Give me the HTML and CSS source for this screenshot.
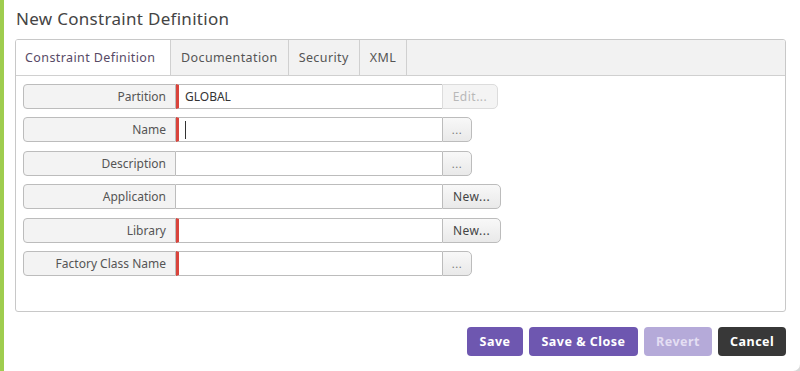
FILE: index.html
```html
<!DOCTYPE html>
<html lang="en">
<head>
  <meta charset="UTF-8" />
  <meta name="viewport" content="width=device-width, initial-scale=1" />
  <title>New Constraint Definition</title>
  <link rel="stylesheet" href="styles.css">
</head>
<body>
  <div class="dialog">
    <h1 class="dialog-title">New Constraint Definition</h1>

    <div class="tab-panel">
      <div class="tab-bar">
        <div class="tab active">Constraint Definition</div>
        <div class="tab">Documentation</div>
        <div class="tab">Security</div>
        <div class="tab">XML</div>
      </div>

      <div class="tab-body">
        <div class="field-row">
          <div class="field-label">Partition</div>
          <div class="field-input required">GLOBAL</div>
          <div class="field-btn disabled wide">Edit...</div>
        </div>
        <div class="field-row">
          <div class="field-label">Name</div>
          <div class="field-input required"><span class="caret"></span></div>
          <div class="field-btn dots">...</div>
        </div>
        <div class="field-row">
          <div class="field-label">Description</div>
          <div class="field-input"></div>
          <div class="field-btn dots">...</div>
        </div>
        <div class="field-row">
          <div class="field-label">Application</div>
          <div class="field-input"></div>
          <div class="field-btn wider">New...</div>
        </div>
        <div class="field-row">
          <div class="field-label">Library</div>
          <div class="field-input required"></div>
          <div class="field-btn wider">New...</div>
        </div>
        <div class="field-row">
          <div class="field-label">Factory Class Name</div>
          <div class="field-input required"></div>
          <div class="field-btn dots">...</div>
        </div>
      </div>
    </div>

    <div class="dialog-footer">
      <button class="btn btn-primary btn-save">Save</button>
      <button class="btn btn-primary btn-save-close">Save &amp; Close</button>
      <button class="btn btn-primary btn-disabled">Revert</button>
      <button class="btn btn-dark">Cancel</button>
    </div>
  </div>
</body>
</html>
```

FILE: styles.css
```css
* {
  box-sizing: border-box;
  margin: 0;
  padding: 0;
}

body {
  font-family: "Noto Sans", "Open Sans", sans-serif;
  background: #d8d8d8;
  color: #555;
  width: 800px;
  height: 371px;
  overflow: hidden;
}

.dialog {
  width: 800px;
  height: 371px;
  background: #fff;
  border-left: 4px solid #9fcd4f;
  border-bottom-right-radius: 7px;
  padding: 0 14px 0 11px;
}

.dialog-title {
  font-size: 17px;
  font-weight: 400;
  color: #444;
  letter-spacing: 0.3px;
  height: 39px;
  line-height: 38px;
  padding-left: 1px;
}

.tab-panel {
  border: 1px solid #c8c8c8;
  border-radius: 3px;
  height: 273px;
  overflow: hidden;
}

.tab-bar {
  display: flex;
  height: 36px;
  background: #f2f2f2;
  border-bottom: 1px solid #d0d0d0;
}

.tab {
  font-size: 12.5px;
  letter-spacing: 0.4px;
  color: #555;
  line-height: 35px;
  padding: 0 10px;
  border-right: 1px solid #d0d0d0;
}

.tab.active {
  background: #fff;
  color: #574a66;
  width: 155px;
  padding: 0 9px;
}

.tab-body {
  padding: 8px 7px;
}

.field-row {
  display: flex;
  height: 25px;
  margin-bottom: 8.4px;
}

.field-label {
  width: 153px;
  background: #f3f3f3;
  border: 1px solid #bcbcbc;
  border-radius: 4px 0 0 4px;
  font-size: 12px;
  text-align: right;
  line-height: 23px;
  padding-right: 9px;
}

.field-input {
  width: 266px;
  border-top: 1px solid #bcbcbc;
  border-bottom: 1px solid #bcbcbc;
  font-size: 12px;
  color: #333;
  line-height: 23px;
  padding-left: 9px;
}

.field-input.required {
  border-left: 3px solid #d9443c;
  padding-left: 6px;
}

.caret {
  display: inline-block;
  width: 1px;
  height: 18px;
  background: #333;
  vertical-align: middle;
  margin-top: -2px;
}

.field-btn {
  width: 30px;
  border: 1px solid #bcbcbc;
  border-radius: 0 5px 5px 0;
  background: linear-gradient(#f8f8f8, #e9e9e9);
  font-size: 12px;
  letter-spacing: 0.5px;
  color: #444;
  text-align: center;
  line-height: 23px;
}

.field-btn.dots {
  color: #777;
  font-size: 11px;
}

.field-btn.wide {
  width: 56px;
}

.field-btn.wider {
  width: 59px;
}

.field-btn.disabled {
  background: #f4f4f4;
  border-color: #dcdcdc;
  color: #b8b8b8;
}

.dialog-footer {
  display: flex;
  justify-content: flex-end;
  gap: 6px;
  padding-top: 15px;
}

.btn {
  font-family: inherit;
  font-size: 12.5px;
  font-weight: 700;
  letter-spacing: 0.5px;
  color: #fff;
  border: none;
  border-radius: 4px;
  height: 29px;
  padding: 0 12px;
}

.btn-primary {
  background: #6e57b0;
}

.btn-save {
  width: 56px;
}

.btn-save-close {
  width: 109px;
}

.btn-disabled {
  background: #b5aad9;
  color: #e4def3;
  width: 68px;
}

.btn-dark {
  background: #383838;
  width: 68px;
}
```
